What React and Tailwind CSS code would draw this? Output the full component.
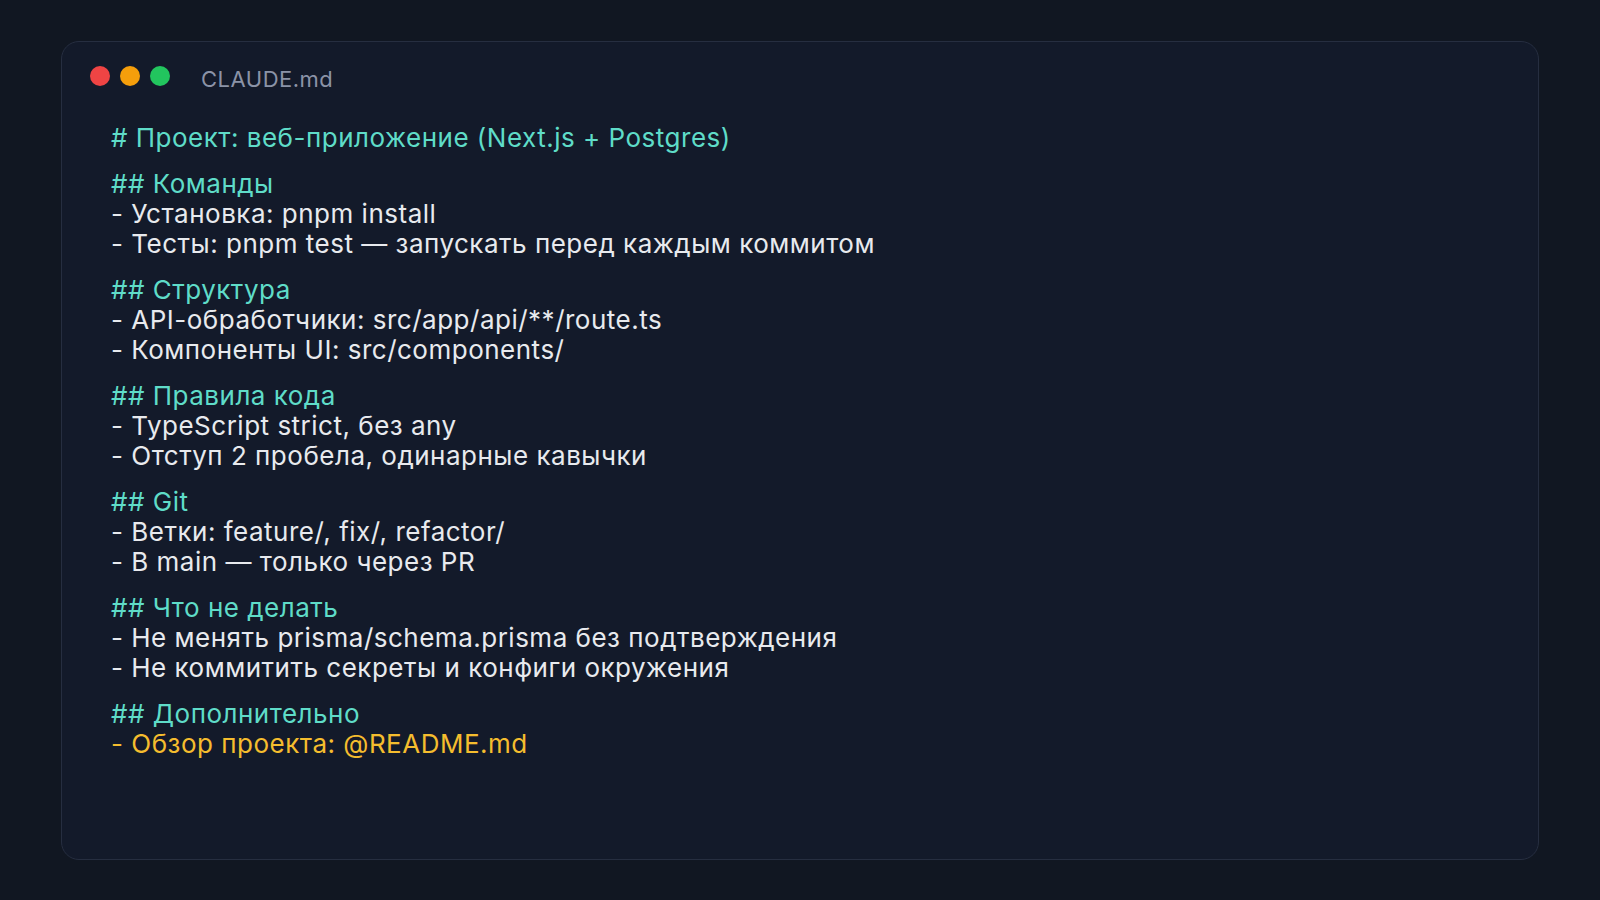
import React from "react";

const groups = [
  {
    heading: "## Команды",
    lines: ["- Установка: pnpm install", "- Тесты: pnpm test — запускать перед каждым коммитом"],
  },
  {
    heading: "## Структура",
    lines: ["- API-обработчики: src/app/api/**/route.ts", "- Компоненты UI: src/components/"],
  },
  {
    heading: "## Правила кода",
    lines: ["- TypeScript strict, без any", "- Отступ 2 пробела, одинарные кавычки"],
  },
  {
    heading: "## Git",
    lines: ["- Ветки: feature/, fix/, refactor/", "- В main — только через PR"],
  },
  {
    heading: "## Что не делать",
    lines: ["- Не менять prisma/schema.prisma без подтверждения", "- Не коммитить секреты и конфиги окружения"],
  },
];

const App = () => {
  return (
    <div className="w-[1600px] h-[900px] bg-[#111722] px-[61px] pt-[41px] pb-[40px] font-['Inter',sans-serif]">
      <div className="h-full rounded-[18px] border border-[#262e40] bg-[#131a2a] pt-[24px] pl-[28px]">
        <div className="flex items-center h-[20px]">
          <div className="flex gap-[10px]">
            <span className="w-[20px] h-[20px] rounded-full bg-[#ef4444]" />
            <span className="w-[20px] h-[20px] rounded-full bg-[#f59e0b]" />
            <span className="w-[20px] h-[20px] rounded-full bg-[#22c55e]" />
          </div>
          <span className="ml-[31px] mt-[7px] text-[22px] text-[#8b93a7] tracking-[0.5px]">CLAUDE.md</span>
        </div>

        <div className="pl-[21px] pt-[37px] text-[26px] leading-[30px] tracking-[0.5px] text-[#e8eaee]">
          <div className="text-[#5fdcc8]"># Проект: веб-приложение (Next.js + Postgres)</div>
          {groups.map((g) => (
            <div key={g.heading} className="mt-[16px]">
              <div className="text-[#5fdcc8]">{g.heading}</div>
              {g.lines.map((l) => (
                <div key={l}>{l}</div>
              ))}
            </div>
          ))}
          <div className="mt-[16px]">
            <div className="text-[#5fdcc8]">## Дополнительно</div>
            <div className="text-[#f5bd2e]">- Обзор проекта: @README.md</div>
          </div>
        </div>
      </div>
    </div>
  );
};

export default App;
